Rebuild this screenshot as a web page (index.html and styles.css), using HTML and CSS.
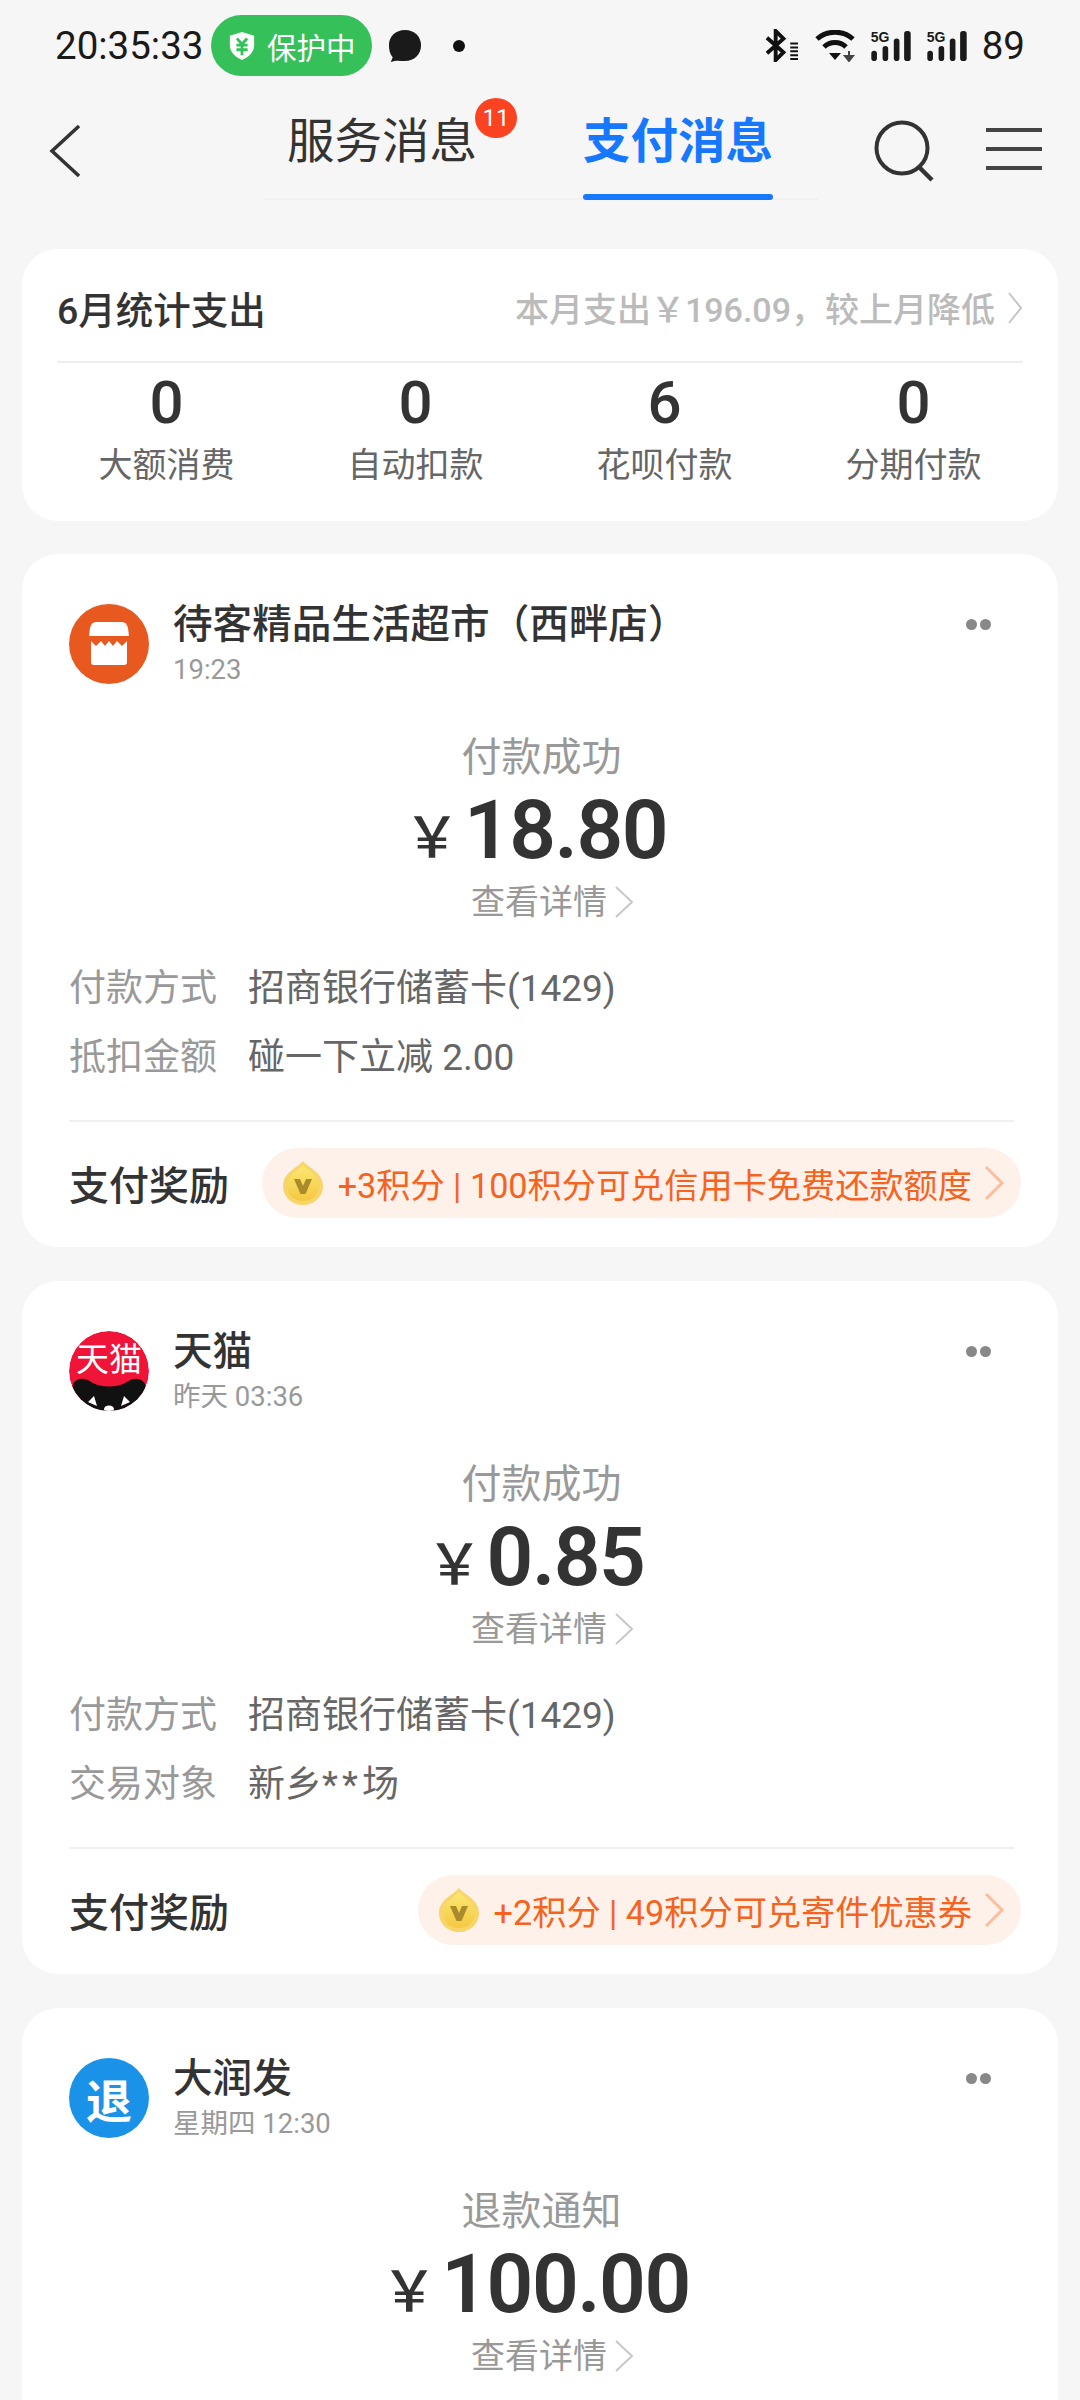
FILE: index.html
```html
<!DOCTYPE html>
<html>
    <head>
        <meta charset="UTF-8">
        <title>支付消息</title>
        <link rel="stylesheet" href="styles.css">
    </head>
    <body>
        <!-- 상태바 -->
        <div class="status">
            <span class="clock">20:35:33</span>
            <span class="guard">
                <svg class="guard-icon" viewBox="0 0 30 32"><path d="M15 1 L28 5 V15 C28 23 22 28 15 31 C8 28 2 23 2 15 V5 Z" fill="#fff"/><path d="M9.500 8 L15 14 L20.500 8 M9 15 H21 M9 20 H21 M15 14 V26" fill="none" stroke="#36c05a" stroke-width="3"/></svg>
                保护中
            </span>
            <svg class="bubble" viewBox="0 0 36 36"><path d="M18 1 C28 1 35 8 35 17 C35 27 28 34 18 34 C14 34 10 33 7 34 L3 35 L5 30 C2 27 1 22 1 17 C1 8 8 1 18 1 Z" fill="#1a1a1a"/></svg>
            <span class="dot"></span>
            <span class="status-right">
                <svg class="ic-bt" viewBox="0 0 36 34"><path d="M3 9 L20 24 L12 32 V2 L20 10 L3 25" fill="none" stroke="#111" stroke-width="4"/><path d="M27 15 H35 M27 19 H35 M27 23 H35 M27 27 H35 M27 31 H35" stroke="#111" stroke-width="2"/></svg>
                <svg class="ic-wifi" viewBox="0 0 40 32"><path d="M2 9 C12 0 28 0 38 9" fill="none" stroke="#111" stroke-width="5"/><path d="M9 17 C15 11 25 11 31 17" fill="none" stroke="#111" stroke-width="5"/><path d="M14 23 H26 L20 30 Z" fill="#111"/><path d="M34 21 V27 M30 26 H38 L34 31 Z" stroke="#444" stroke-width="2" fill="#444"/></svg>
                <span class="signal"><i class="five-g">5G</i><svg viewBox="0 0 42 32"><rect x="0" y="21" width="6" height="11" rx="3"/><rect x="12" y="16" width="6" height="16" rx="3"/><rect x="24" y="8" width="6" height="24" rx="3"/><rect x="35" y="0" width="7" height="32" rx="3"/></svg></span>
                <span class="signal"><i class="five-g">5G</i><svg viewBox="0 0 42 32"><rect x="0" y="21" width="6" height="11" rx="3"/><rect x="12" y="16" width="6" height="16" rx="3"/><rect x="24" y="8" width="6" height="24" rx="3"/><rect x="35" y="0" width="7" height="32" rx="3"/></svg></span>
                <span class="battery">89</span>
            </span>
        </div>

        <!-- 상단 탭 -->
        <div class="nav">
            <svg class="back" viewBox="0 0 32 54"><path d="M31 2 L4 27 L31 52" fill="none" stroke="#333" stroke-width="3.500"/></svg>
            <div class="tabs">
                <div class="tab">服务消息<span class="badge">11</span></div>
                <div class="tab on">支付消息</div>
            </div>
            <svg class="search" viewBox="0 0 60 62"><circle cx="28" cy="28" r="25.500" fill="none" stroke="#333" stroke-width="4"/><path d="M45 47 L58 60" stroke="#333" stroke-width="4.500"/></svg>
            <div class="menu"><span></span><span></span><span></span></div>
        </div>

        <!-- 월 통계 -->
        <div class="card total">
            <div class="total-head">
                <span class="total-title">6月统计支出</span>
                <span class="total-more">本月支出￥196.09，较上月降低<svg class="arrow" viewBox="0 0 16 34"><path d="M2 2 L14 17 L2 32" fill="none" stroke="#c4c4c4" stroke-width="2"/></svg></span>
            </div>
            <div class="total-list">
                <div class="total-item"><b>0</b><span>大额消费</span></div>
                <div class="total-item"><b>0</b><span>自动扣款</span></div>
                <div class="total-item"><b>6</b><span>花呗付款</span></div>
                <div class="total-item"><b>0</b><span>分期付款</span></div>
            </div>
        </div>

        <!-- 결제 카드 1 -->
        <div class="card bill">
            <div class="bill-head">
                <div class="logo logo-shop">
                    <svg viewBox="0 0 56 56" width="56" height="56"><path d="M15 6 H41 C44 6 46 8 47 12 L48 20 H8 L9 12 C10 8 12 6 15 6 Z" fill="#fff"/><path d="M10 25 L15 30 L20 25 L24 30 L28 25 L32 30 L36 25 L41 30 L46 25 V46 C46 48 45 49 43 49 H13 C11 49 10 48 10 46 Z" fill="#fff"/></svg>
                </div>
                <div class="bill-info">
                    <div class="bill-name">待客精品生活超市（西畔店）</div>
                    <div class="bill-time">19:23</div>
                </div>
                <div class="more"><span></span><span></span></div>
            </div>
            <div class="bill-state">付款成功</div>
            <div class="bill-money"><em>￥</em>18.80</div>
            <div class="bill-link">查看详情<svg class="arrow-link" viewBox="0 0 20 34"><path d="M2 2 L18 17 L2 32" fill="none" stroke="#c8c8c8" stroke-width="2"/></svg></div>
            <div class="bill-rows">
                <div class="row"><label>付款方式</label><span>招商银行储蓄卡(1429)</span></div>
                <div class="row"><label>抵扣金额</label><span>碰一下立减 2.00</span></div>
            </div>
            <div class="reward">
                <span class="reward-title">支付奖励</span>
                <span class="reward-pill">
                    <svg class="coin" viewBox="0 0 42 46"><defs><linearGradient id="gold1" x1="0" y1="0" x2="0" y2="1"><stop offset="0" stop-color="#fbe872"/><stop offset="1" stop-color="#f4c842"/></linearGradient></defs><path d="M21 1 C25 7 41 12 41 26 C41 37 32 45 21 45 C10 45 1 37 1 26 C1 12 17 7 21 1 Z" fill="#f8d56a"/><path d="M21 5 C25 10 37 15 37 26 C37 35 30 41 21 41 C12 41 5 35 5 26 C5 15 17 10 21 5 Z" fill="url(#gold1)"/><path d="M12 19 H18 L21 26 L24 19 H30 L23.500 34 H18.500 Z" fill="#a98b2c"/></svg>
                    <span class="reward-text">+3积分 | 100积分可兑信用卡免费还款额度</span>
                    <svg class="arrow-o" viewBox="0 0 22 36"><path d="M3 2 L19 18 L3 34" fill="none" stroke="#fbbd9c" stroke-width="3"/></svg>
                </span>
            </div>
        </div>

        <!-- 결제 카드 2 -->
        <div class="card bill">
            <div class="bill-head">
                <div class="logo logo-tmall">
                    <svg viewBox="0 0 80 80" width="80" height="80"><circle cx="40" cy="40" r="40" fill="#f01438"/><text x="40" y="40" text-anchor="middle" class="tmall-text">天猫</text><path d="M4 53 C8 46 16 47 22 51 C32 57 48 57 58 51 C64 47 72 46 76 53 C78 60 72 72 62 80 H18 C8 72 2 60 4 53 Z" fill="#111"/><path d="M19 71 L25 65 L28 75 Z M61 71 L55 65 L52 75 Z" fill="#fff"/><ellipse cx="40" cy="78" rx="5" ry="3.500" fill="#fff"/></svg>
                </div>
                <div class="bill-info">
                    <div class="bill-name">天猫</div>
                    <div class="bill-time">昨天 03:36</div>
                </div>
                <div class="more"><span></span><span></span></div>
            </div>
            <div class="bill-state">付款成功</div>
            <div class="bill-money"><em>￥</em>0.85</div>
            <div class="bill-link">查看详情<svg class="arrow-link" viewBox="0 0 20 34"><path d="M2 2 L18 17 L2 32" fill="none" stroke="#c8c8c8" stroke-width="2"/></svg></div>
            <div class="bill-rows">
                <div class="row"><label>付款方式</label><span>招商银行储蓄卡(1429)</span></div>
                <div class="row"><label>交易对象</label><span>新乡<i class="stars">**</i>场</span></div>
            </div>
            <div class="reward">
                <span class="reward-title">支付奖励</span>
                <span class="reward-pill">
                    <svg class="coin" viewBox="0 0 42 46"><defs><linearGradient id="gold2" x1="0" y1="0" x2="0" y2="1"><stop offset="0" stop-color="#fbe872"/><stop offset="1" stop-color="#f4c842"/></linearGradient></defs><path d="M21 1 C25 7 41 12 41 26 C41 37 32 45 21 45 C10 45 1 37 1 26 C1 12 17 7 21 1 Z" fill="#f8d56a"/><path d="M21 5 C25 10 37 15 37 26 C37 35 30 41 21 41 C12 41 5 35 5 26 C5 15 17 10 21 5 Z" fill="url(#gold2)"/><path d="M12 19 H18 L21 26 L24 19 H30 L23.500 34 H18.500 Z" fill="#a98b2c"/></svg>
                    <span class="reward-text">+2积分 | 49积分可兑寄件优惠券</span>
                    <svg class="arrow-o" viewBox="0 0 22 36"><path d="M3 2 L19 18 L3 34" fill="none" stroke="#fbbd9c" stroke-width="3"/></svg>
                </span>
            </div>
        </div>

        <!-- 결제 카드 3 -->
        <div class="card bill">
            <div class="bill-head">
                <div class="logo logo-back">退</div>
                <div class="bill-info">
                    <div class="bill-name">大润发</div>
                    <div class="bill-time">星期四 12:30</div>
                </div>
                <div class="more"><span></span><span></span></div>
            </div>
            <div class="bill-state">退款通知</div>
            <div class="bill-money"><em>￥</em>100.00</div>
            <div class="bill-link">查看详情<svg class="arrow-link" viewBox="0 0 20 34"><path d="M2 2 L18 17 L2 32" fill="none" stroke="#c8c8c8" stroke-width="2"/></svg></div>
        </div>
    </body>
</html>
```

FILE: styles.css
```css
html, body{
    margin: 0;
    height: 2400px;
    overflow: hidden;
}
body{
    background-color: #f6f6f6;
    font-family: Roboto, "Noto Sans CJK SC", sans-serif;
    color: #333;
}

/* status bar */
.status{
    display: flex;
    align-items: center;
    height: 61px;
    padding: 15px 0 0 55px;
}
.clock{
    font-size: 38.500px;
    color: #1a1a1a;
    width: 156px;
}
.guard{
    display: flex;
    align-items: center;
    gap: 11px;
    width: 161px;
    height: 61px;
    padding-left: 17px;
    box-sizing: border-box;
    border-radius: 31px;
    background-color: #36c05a;
    color: #fff;
    font-size: 29.500px;
}
.guard-icon{
    width: 28px;
    height: 32px;
}
.bubble{
    width: 34px;
    height: 34px;
    margin-left: 16px;
}
.dot{
    width: 12px;
    height: 12px;
    border-radius: 50%;
    background-color: #111;
    margin-left: 31px;
}
.status-right{
    display: flex;
    align-items: center;
    margin-left: auto;
    padding-right: 55px;
}
.ic-bt{
    width: 35px;
    height: 33px;
}
.ic-wifi{
    width: 40px;
    height: 32px;
    margin-left: 16px;
}
.signal{
    position: relative;
    display: block;
    width: 40px;
    height: 30px;
    margin-left: 16px;
}
.signal svg{
    display: block;
    width: 40px;
    height: 30px;
    fill: #1a1a1a;
}
.five-g{
    position: absolute;
    left: 0;
    top: 0;
    font: bold 14px/12px "Liberation Sans", sans-serif;
    color: #1a1a1a;
}
.battery{
    font-size: 38.500px;
    color: #1a1a1a;
    margin-left: 15px;
}

/* top nav */
.nav{
    position: relative;
    height: 124px;
    margin-top: 0;
}
.back{
    position: absolute;
    left: 48px;
    top: 48px;
    width: 32px;
    height: 54px;
}
.tabs{
    position: absolute;
    left: 264px;
    top: 0;
    width: 554px;
    height: 124px;
    display: flex;
    border-bottom: 2px solid #f0f0f0;
    box-sizing: border-box;
    padding-left: 23px;
    gap: 106px;
}
.tab{
    position: relative;
    font-size: 47.500px;
    line-height: 64px;
    padding-top: 34px;
    color: #333;
}
.tab.on{
    color: #1677ff;
    font-weight: 700;
}
.tab.on::after{
    content: '';
    position: absolute;
    left: 0;
    right: 0;
    bottom: -2px;
    height: 6px;
    border-radius: 3px;
    background-color: #1677ff;
}
.badge{
    position: absolute;
    right: -40px;
    top: 22px;
    width: 42px;
    height: 40px;
    border-radius: 50%;
    background-color: #fb4322;
    color: #fff;
    font-size: 24px;
    line-height: 40px;
    text-align: center;
    font-weight: 400;
}
.search{
    position: absolute;
    left: 874px;
    top: 44px;
    width: 60px;
    height: 62px;
}
.menu{
    position: absolute;
    left: 986px;
    top: 52px;
    width: 56px;
    display: flex;
    flex-direction: column;
    gap: 15px;
}
.menu span{
    display: block;
    height: 4px;
    background-color: #444;
}

/* cards */
.card{
    margin: 0 22px 34px;
    background-color: #fff;
    border-radius: 36px;
}

/* month total */
.total{
    margin-top: 49px;
    margin-bottom: 33px;
    height: 272px;
    box-sizing: border-box;
}
.total-head{
    display: flex;
    align-items: center;
    justify-content: space-between;
    height: 114px;
    margin: 0 35px;
    padding-top: 5px;
    box-sizing: border-box;
    border-bottom: 2px solid #eeeeee;
}
.total-title{
    font-size: 37.500px;
    font-weight: 500;
}
.total-more{
    display: flex;
    align-items: center;
    font-size: 34px;
    font-weight: 500;
    color: #bbbbbb;
}
.arrow{
    width: 16px;
    height: 34px;
    margin-left: 12px;
}
.total-list{
    display: grid;
    grid-template-columns: repeat(4, 1fr);
    padding: 1px 20px 0;
}
.total-item{
    display: flex;
    flex-direction: column;
    align-items: center;
}
.total-item b{
    font-size: 60px;
    line-height: 78px;
    font-weight: 500;
}
.total-item span{
    font-size: 34px;
    line-height: 46px;
    color: #666;
}

/* bill card */
.bill{
    height: 693px;
    padding: 50px 44px 0 47px;
    box-sizing: border-box;
}
.bill-head{
    display: flex;
    align-items: flex-start;
}
.logo{
    flex: none;
    width: 80px;
    height: 80px;
    border-radius: 50%;
    display: flex;
    align-items: center;
    justify-content: center;
    overflow: hidden;
}
.logo-shop{
    background-color: #e8591f;
}
.logo-back{
    background-color: #1a92e8;
    color: #fff;
    font-size: 46px;
    font-weight: 700;
}
.tmall-text{
    font-size: 33px;
    fill: #fff;
}
.bill-info{
    margin: -1px 0 0 24px;
}
.bill-name{
    font-size: 39.600px;
    line-height: 44px;
    font-weight: 500;
}
.bill-time{
    margin-top: 3px;
    font-size: 27.500px;
    line-height: 40px;
    color: #999;
}
.more{
    display: flex;
    gap: 3px;
    margin: 15px 23px 0 auto;
}
.more span{
    width: 11px;
    height: 11px;
    border-radius: 50%;
    background-color: #888;
}
.bill-state{
    margin-top: 43px;
    text-align: center;
    font-size: 40px;
    line-height: 50px;
    color: #999;
}
.bill-money{
    display: flex;
    align-items: center;
    justify-content: center;
    margin-top: -4px;
    padding-right: 12px;
    font-size: 82px;
    line-height: 96px;
    font-weight: 600;
    letter-spacing: -1.500px;
}
.bill-money em{
    font-style: normal;
    font-size: 56px;
    font-weight: 500;
    margin: 6px 4px 0 0;
    letter-spacing: 0;
    font-family: "Noto Sans CJK SC", sans-serif;
}
.bill-link{
    display: flex;
    align-items: center;
    justify-content: center;
    margin-top: -1px;
    padding-left: 22px;
    font-size: 34px;
    line-height: 44px;
    color: #999;
}
.arrow-link{
    width: 20px;
    height: 34px;
    margin-left: 7px;
}
.bill-rows{
    margin-top: 30px;
}
.row{
    display: flex;
    font-size: 37px;
    line-height: 69px;
}
.row label{
    width: 179px;
    color: #999;
}
.row span{
    color: #666;
}
.stars{
    font-style: normal;
    letter-spacing: 4px;
}
.reward{
    display: flex;
    align-items: center;
    justify-content: space-between;
    margin-top: 28px;
    padding-top: 26px;
    border-top: 2px solid #f0f0f0;
}
.reward-title{
    font-size: 40px;
    font-weight: 500;
}
.reward-pill{
    display: flex;
    align-items: center;
    height: 70px;
    margin-right: -7px;
    padding: 0 16px 0 20px;
    border-radius: 35px;
    background-color: #fef1ea;
}
.coin{
    width: 42px;
    height: 46px;
    margin-right: 14px;
}
.reward-text{
    font-size: 34.200px;
    color: #f5631f;
}
.arrow-o{
    width: 22px;
    height: 36px;
    margin-left: 11px;
}
```
